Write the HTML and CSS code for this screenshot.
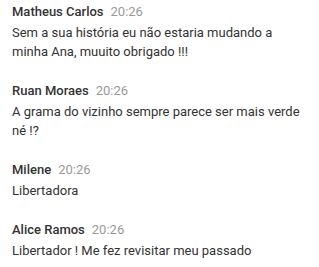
FILE: index.html
```html
<!DOCTYPE html>
<html>
<head>
<meta charset="utf-8">
<link rel="stylesheet" href="styles.css">
</head>
<body>
<div class="list">
  <div class="comment">
    <div class="head"><span class="name">Matheus Carlos</span><span class="time">20:26</span></div>
    <div class="text">Sem a sua história eu não estaria mudando a minha Ana, muuito obrigado !!!</div>
  </div>
  <div class="comment">
    <div class="head"><span class="name">Ruan Moraes</span><span class="time">20:26</span></div>
    <div class="text">A grama do vizinho sempre parece ser mais verde né !?</div>
  </div>
  <div class="comment">
    <div class="head"><span class="name">Milene</span><span class="time">20:26</span></div>
    <div class="text">Libertadora</div>
  </div>
  <div class="comment">
    <div class="head"><span class="name">Alice Ramos</span><span class="time">20:26</span></div>
    <div class="text">Libertador ! Me fez revisitar meu passado</div>
  </div>
</div>
</body>
</html>
```
FILE: styles.css
```css
html, body { margin: 0; padding: 0; background: #fff; }
body { font-family: Roboto, "Noto Sans", sans-serif; font-size: 13px; color: #333; }
.list { display: flex; flex-direction: column; gap: 19.5px; padding: 1.5px 12px 0 12px; width: 295px; }
.head { line-height: 20px; display: flex; gap: 7px; align-items: baseline; margin-bottom: 1.5px; }
.name { font-weight: 500; color: #333; }
.time { color: #999; }
.text { line-height: 19px; }
```
